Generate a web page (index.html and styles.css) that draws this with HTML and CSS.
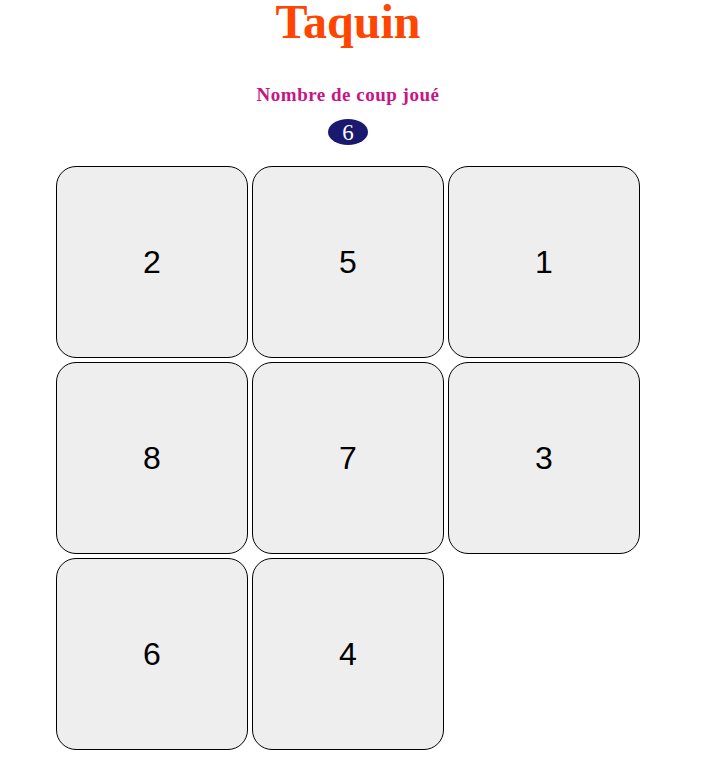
FILE: index.html
```html
<!DOCTYPE html>
<html lang="fr">
<head>
<meta charset="utf-8">
<title>Taquin</title>
<link rel="stylesheet" href="styles.css">
</head>
<body>
<main class="page">
<h1 class="title">Taquin</h1>
<h3 class="subtitle">Nombre de coup joué</h3>
<div class="counter"><span class="badge">6</span></div>
<div class="board">
  <div class="tile">2</div>
  <div class="tile">5</div>
  <div class="tile">1</div>
  <div class="tile">8</div>
  <div class="tile">7</div>
  <div class="tile">3</div>
  <div class="tile">6</div>
  <div class="tile">4</div>
  <div class="empty"></div>
</div>
</main>
</body>
</html>
```
FILE: styles.css
```css
html, body {
  margin: 0;
  padding: 0;
  background: #fff;
}
body {
  font-family: "Liberation Serif", "Times New Roman", serif;
}
.page {
  width: 696px;
  display: flex;
  flex-direction: column;
  align-items: center;
}
.title {
  margin: 0;
  height: 48px;
  line-height: 44px;
  font-size: 48px;
  font-weight: bold;
  color: #ff4500;
  text-align: center;
}
.subtitle {
  margin: 35px 0 0;
  height: 24px;
  line-height: 24px;
  font-size: 19px;
  letter-spacing: 0.5px;
  font-weight: bold;
  color: #c71585;
  text-align: center;
}
.counter {
  margin-top: 12px;
  text-align: center;
  height: 26px;
}
.badge {
  display: inline-block;
  width: 40px;
  height: 26px;
  line-height: 27px;
  border-radius: 50%;
  background: #191970;
  color: #fff;
  font-size: 23px;
  text-align: center;
}
.board {
  margin-top: 19px;
  display: grid;
  grid-template-columns: repeat(3, 192px);
  grid-auto-rows: 192px;
  gap: 4px;
  padding: 2px;
}
.tile {
  box-sizing: border-box;
  border: 1px solid #000;
  border-radius: 20px;
  background: #eee;
  display: flex;
  align-items: center;
  justify-content: center;
  font-family: "Liberation Sans", Arial, sans-serif;
  font-size: 32px;
  color: #000;
}
```
